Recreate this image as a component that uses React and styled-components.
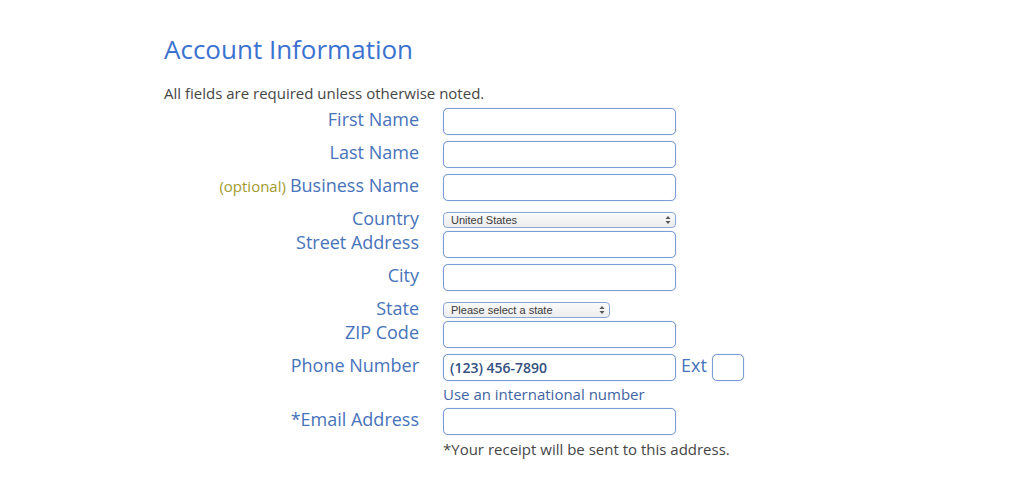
import React from 'react';
import styled, { createGlobalStyle } from 'styled-components';

const GlobalStyle = createGlobalStyle`
    body {
        margin: 0;
        background: #ffffff;
        font-family: "Open Sans", "Noto Sans", sans-serif;
    }
`

const Page = styled.div`
    width: 1024px;
    height: 488px;
    box-sizing: border-box;
    padding: 31px 0 0 164px;
    overflow: hidden;
`

const Title = styled.h1`
    margin: 0;
    font-size: 26px;
    line-height: 36px;
    font-weight: 400;
    color: #3b72cf;
`

const Note = styled.p`
    margin: 16px 0 5px 0;
    font-size: 15px;
    line-height: 20px;
    color: #464646;
`

const Row = styled.div`
    display: grid;
    grid-template-columns: 255px auto;
    column-gap: 24px;
    align-items: start;
    margin-bottom: ${p => p.$gap ?? 6}px;
`

const Label = styled.label`
    text-align: right;
    font-size: 18px;
    line-height: 22px;
    padding-bottom: 2px;
    color: #4773ba;
    white-space: nowrap;
`

const Optional = styled.span`
    font-size: 15px;
    color: #a29b2c;
    margin-right: 4px;
`

const Field = styled.div`
    display: flex;
    flex-direction: column;
    align-items: flex-start;
`

const Inline = styled.div`
    display: flex;
    align-items: flex-start;
    gap: 5px;
`

const Input = styled.input`
    display: block;
    box-sizing: border-box;
    width: ${p => p.$w ?? 233}px;
    height: 27px;
    margin: 0;
    padding: 0 6px;
    border: 1px solid #7b9dd6;
    border-radius: 5px;
    box-shadow: 0 0 1px rgba(90, 130, 200, 0.6);
    background: #ffffff;
    font-family: "Open Sans", sans-serif;
    font-size: 14px;
    font-weight: 600;
    color: #33507f;
    outline: none;
`

const SelectWrap = styled.div`
    position: relative;
    margin-top: 5px;
    width: ${p => p.$w}px;
    height: 16px;
`

const Select = styled.select`
    display: block;
    appearance: none;
    -webkit-appearance: none;
    box-sizing: border-box;
    width: 100%;
    height: 16px;
    margin: 0;
    padding: 0 0 0 7px;
    border: 1px solid #8ba6d3;
    border-radius: 4px;
    background: linear-gradient(#fafafa, #ededed);
    font-family: "Liberation Sans", Arial, sans-serif;
    font-size: 11px;
    line-height: 14px;
    color: #3a3a3a;
    outline: none;
`

const Arrows = styled.svg`
    position: absolute;
    right: 5px;
    top: 3px;
    pointer-events: none;
`

const Ext = styled.span`
    font-size: 18px;
    line-height: 22px;
    color: #4773ba;
`

const Hint = styled.div`
    margin-top: ${p => p.$muted ? 4 : 3}px;
    font-size: 15px;
    line-height: 20px;
    color: ${p => p.$muted ? '#464646' : '#3f64a3'};
    white-space: nowrap;
`

const SelectBox = ({ width, value }) => (
    <SelectWrap $w={width}>
        <Select defaultValue={value}>
            <option>{value}</option>
        </Select>
        <Arrows width='6' height='10' viewBox='0 0 6 10'>
            <path d='M0.5 4 L3 1 L5.5 4 Z M0.5 6 L3 9 L5.5 6 Z' fill='#555' />
        </Arrows>
    </SelectWrap>
)

const App = () => {
    return (
        <Page>
            <GlobalStyle />
            <Title>Account Information</Title>
            <Note>All fields are required unless otherwise noted.</Note>
            <Row>
                <Label>First Name</Label>
                <Input />
            </Row>
            <Row>
                <Label>Last Name</Label>
                <Input />
            </Row>
            <Row>
                <Label><Optional>(optional)</Optional>Business Name</Label>
                <Input />
            </Row>
            <Row $gap={0}>
                <Label>Country</Label>
                <SelectBox width={233} value='United States' />
            </Row>
            <Row>
                <Label>Street Address</Label>
                <Input />
            </Row>
            <Row>
                <Label>City</Label>
                <Input />
            </Row>
            <Row $gap={0}>
                <Label>State</Label>
                <SelectBox width={167} value='Please select a state' />
            </Row>
            <Row>
                <Label>ZIP Code</Label>
                <Input />
            </Row>
            <Row $gap={4}>
                <Label>Phone Number</Label>
                <Field>
                    <Inline>
                        <Input defaultValue='(123) 456-7890' />
                        <Ext>Ext</Ext>
                        <Input $w={32} />
                    </Inline>
                    <Hint>Use an international number</Hint>
                </Field>
            </Row>
            <Row>
                <Label>*Email Address</Label>
                <Field>
                    <Input />
                    <Hint $muted>*Your receipt will be sent to this address.</Hint>
                </Field>
            </Row>
        </Page>
    )
}

export default App
